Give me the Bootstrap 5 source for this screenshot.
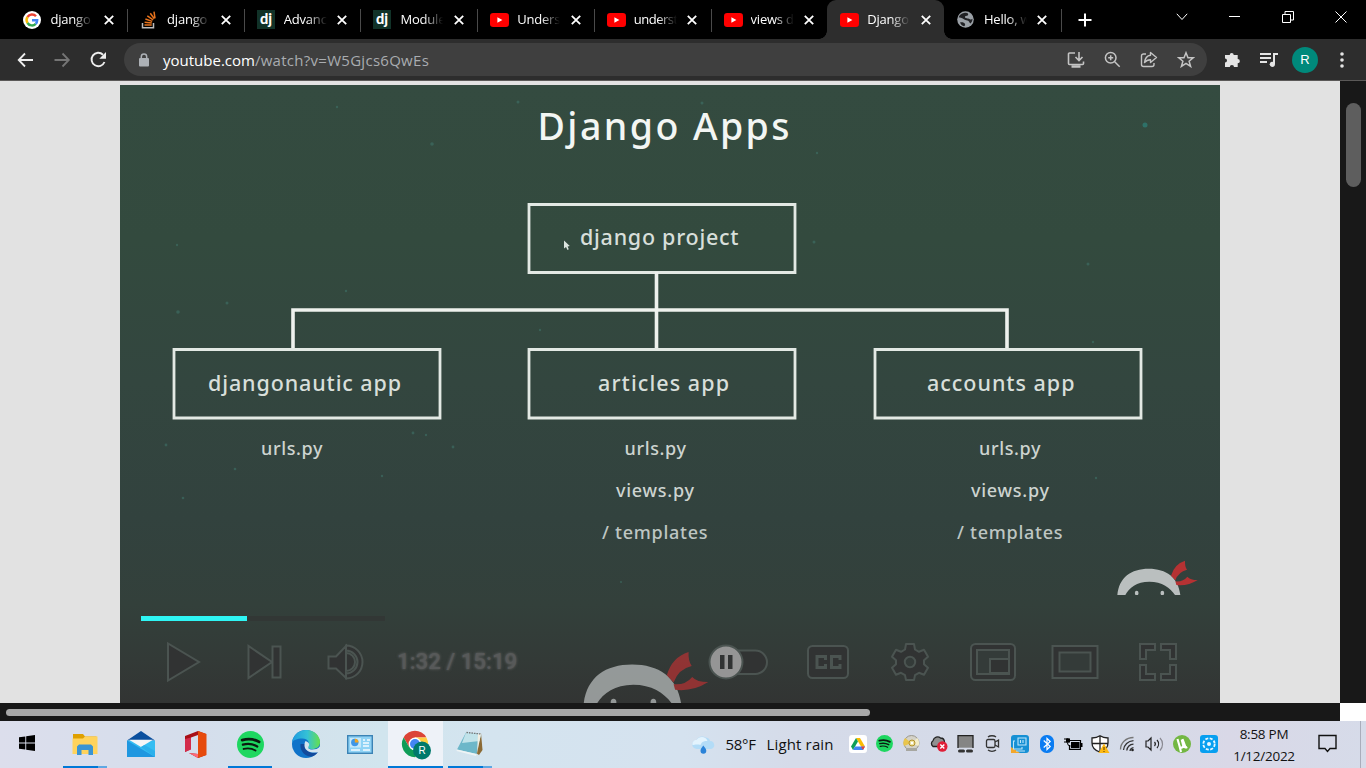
<!DOCTYPE html>
<html lang="en">
<head>
<meta charset="utf-8">
<meta name="viewport" content="width=device-width, initial-scale=1">
<title>Django Apps</title>
<link href="https://cdn.jsdelivr.net/npm/bootstrap@5.3.0/dist/css/bootstrap.min.css" rel="stylesheet">
<style>
body{width:1366px;height:768px;overflow:hidden;font-family:"Open Sans","Noto Sans",sans-serif;background:#000}
svg{display:block;flex:none}
/* tab strip */
.strip{height:39px;background:#000;padding-left:10.4px;color:#fff;font-size:13px}
.tab{width:116.7px;flex:none;height:39px;padding-left:13px;position:relative}
.tab::after{content:"";position:absolute;right:-1px;top:9px;width:1px;height:23px;background:#4a4a4a}
.tab.plain::after{display:none}
.tab .ttl{width:43px;margin-left:9px;white-space:nowrap;letter-spacing:-.2px;-webkit-mask-image:linear-gradient(90deg,#000 55%,transparent);mask-image:linear-gradient(90deg,#000 55%,transparent)}
.tab .x{margin-left:10.5px}
.tab.on{background:#2d2d2d;border-radius:9px 9px 0 0}
.tab.on::before{content:"";position:absolute;left:-8px;bottom:0;width:8px;height:8px;background:radial-gradient(circle at 0 0,transparent 7.5px,#2d2d2d 8px)}
.tab.on::after{right:-8px;top:auto;bottom:0;width:8px;height:8px;background:radial-gradient(circle at 100% 0,transparent 7.5px,#2d2d2d 8px)}
.wincap{width:53px}
.caps{padding-bottom:6px;margin-right:-1px}
/* toolbar */
.tools{height:42px;background:#2d2d2d;border-bottom:1px solid #5b5958;padding:0 16px 0 17px}
.omni{width:1083px;height:33px;background:#3f3f3f;border-radius:17px;margin-left:17px;padding:0 12px 0 13px;font-size:15px;color:#a9acb0}
.omni b{font-weight:400;color:#fff;letter-spacing:0}
.urltxt{letter-spacing:.28px;padding-top:1px}
.avatar{width:26px;height:26px;background:#00897b;color:#fff;font:13px "Liberation Sans",sans-serif}
/* page */
.view{height:622px;background:#e2e2e2}
.video{width:1100px;height:618px;margin:4px 0 0 120px;overflow:hidden;background:linear-gradient(#344b40 0,#334a3e 25%,#33463f 48%,#32423e 70%,#33403b 84%,#333a37 93%,#323433 100%)}
.stage{height:531px}
.track{height:5px;margin:0 21px;background:linear-gradient(90deg,#323735 244px,transparent 244px)}
.played{height:5px;background:#2ff5f4}
.ctl{height:44px;margin:19px 0 0 22px}
.ctl .cell{width:81px}
.ctl .cell.r{width:82.5px}
.time{width:121px;margin:-3px 0 0 12px;font:500 22.3px Roboto,sans-serif;color:#575959;text-shadow:0 0 3px #6a6a6a;white-space:nowrap}
.glyphs *{vector-effect:non-scaling-stroke}
.glyphs{fill:#313333;stroke:#4b5451;stroke-width:2}
.logo{position:absolute}
.vbar{width:26px;background:#181818;padding:22px 5px 0 6px}
.vbar div{height:84px;border-radius:8px;background:#5e5e5e}
.hbar{height:18px;background:#181818;padding:6px 0 0 6px}
.hbar div{width:864px;height:7px;border-radius:4px;background:#a8a8a8}
.corner{width:26px;background:#fff}
/* taskbar */
.task{height:47px;background:linear-gradient(90deg,#dcdeec 0,#d5deec 14%,#d3e2ec 22%,#d1e5ee 28%,#d4e4ef 36%,#d5e2ef 50%,#d5dbe9 58%,#d5dae8 72%,#d4dce9 80%,#d9d8e7 90%,#d6dbe9 100%);color:#111}
.app{width:55px;height:47px;position:relative;padding-bottom:1px}
.app .ln{position:absolute;bottom:0;height:2px;background:#0078d7}
.app.act{background:#eef2f8}
.wx{font-size:15px;letter-spacing:-.1px}
.tray{padding-bottom:2px}
.tray>div{width:27px}
.clock{font-size:13.500px;line-height:22px;width:84px;letter-spacing:-.25px}
</style>
</head>
<body class="d-flex flex-column m-0">
<svg width="0" height="0" class="position-absolute">
 <defs>
  <symbol id="x" viewBox="0 0 10 10"><path d="M.8.8l8.4 8.4M9.2.8L.8 9.2" stroke="#fff" stroke-width="1.8"/></symbol>
  <symbol id="yt" viewBox="0 0 19 14"><rect width="19" height="14" rx="3.2" fill="#f00"/><path d="M7.4 4.2v5.6l5-2.8z" fill="#fff"/></symbol>
  <symbol id="spot" viewBox="0 0 26 26"><circle cx="13" cy="13" r="13" fill="#1ed760"/><g fill="none" stroke="#0b1a10" stroke-linecap="round"><path d="M5 8.7c5.500-1.600 11.500-1 16.300 1.800" stroke-width="2.700"/><path d="M5.700 13.200c4.700-1.300 9.700-.7 13.800 1.700" stroke-width="2.200"/><path d="M6.400 17.300c4-1 8-.5 11.400 1.500" stroke-width="1.800"/></g></symbol>
  <symbol id="ninja" viewBox="770 60 245 105"><path d="M771 165C776 112 812 86 865 86S954 112 960 165H944C930 143 905 125 867 125S806 144 795 165z" fill="#babfbf"/><ellipse cx="829" cy="159" rx="5.500" ry="7" fill="#babfbf"/><ellipse cx="906" cy="159" rx="5.500" ry="7" fill="#babfbf"/><path d="M932 107Q942 72 974 62Q973 79 980 89Q954 95 945 121zM945 124Q968 126 981 110Q990 120 1012 120Q982 139 948 135z" fill="#b53233"/></symbol>
  <symbol id="dj" viewBox="0 0 18 19"><rect width="18" height="19" fill="#113228"/><text x="3" y="14.200" font-family="Lato,sans-serif" font-weight="900" font-size="14.500" fill="#fff" textLength="12">dj</text></symbol>
 </defs>
</svg>

<header class="strip d-flex align-items-center">
 <div class="tab d-flex align-items-center"><svg width="18" height="18" viewBox="0 0 18 18"><circle cx="9" cy="9" r="9" fill="#fff"/><g fill="none" stroke-width="2.400"><path d="M4.500 6A5.300 5.300 0 0 1 13 5.300" stroke="#ea4335"/><path d="M4.500 12A5.500 5.500 0 0 1 4.500 6" stroke="#fbbc05"/><path d="M12.700 12.900A5.300 5.300 0 0 1 4.500 12" stroke="#34a853"/><path d="M9 9.200h5.200a5.300 5.300 0 0 1-1.500 3.700" stroke="#4285f4"/></g></svg><span class="ttl">django</span><svg class="x" width="10" height="10"><use href="#x"/></svg></div>
 <div class="tab d-flex align-items-center"><svg width="18" height="18" viewBox="0 0 18 18"><path d="M2.500 12v4.700h11V12" fill="none" stroke="#bcbbbb" stroke-width="1.500"/><g stroke="#e8731c" stroke-width="1.500"><path d="M4.500 14h7.200M4.600 11.200l7.200.9M5.400 8l6.800 2.400M7.300 4.800l5.800 4M10.300 2.200l4 5.600M14 .7l1 6.600"/></g></svg><span class="ttl">django</span><svg class="x" width="10" height="10"><use href="#x"/></svg></div>
 <div class="tab d-flex align-items-center"><svg width="18" height="19"><use href="#dj"/></svg><span class="ttl">Advanc</span><svg class="x" width="10" height="10"><use href="#x"/></svg></div>
 <div class="tab d-flex align-items-center"><svg width="18" height="19"><use href="#dj"/></svg><span class="ttl">Module</span><svg class="x" width="10" height="10"><use href="#x"/></svg></div>
 <div class="tab d-flex align-items-center"><svg width="19" height="14" style="margin-right:-1px"><use href="#yt"/></svg><span class="ttl">Unders</span><svg class="x" width="10" height="10"><use href="#x"/></svg></div>
 <div class="tab d-flex align-items-center"><svg width="19" height="14" style="margin-right:-1px"><use href="#yt"/></svg><span class="ttl" style="letter-spacing:-.5px">underst</span><svg class="x" width="10" height="10"><use href="#x"/></svg></div>
 <div class="tab plain d-flex align-items-center"><svg width="19" height="14" style="margin-right:-1px"><use href="#yt"/></svg><span class="ttl">views d</span><svg class="x" width="10" height="10"><use href="#x"/></svg></div>
 <div class="tab on d-flex align-items-center"><svg width="19" height="14" style="margin-right:-1px"><use href="#yt"/></svg><span class="ttl">Django</span><svg class="x" width="10" height="10"><use href="#x"/></svg></div>
 <div class="tab d-flex align-items-center"><svg width="17" height="17" viewBox="0 0 17 17"><circle cx="8.500" cy="8.500" r="8.300" fill="#9aa0a6"/><path d="M7 2c3-.8 5 .5 4 2s-3 .3-3 2 3 1 4.500 2 2 .5 3-.3c0 2-.8 3.500-2 4.800-1-.2-1-1.800-2-2.500S8 9.500 6.500 8 2.500 7 1.700 6.300C2.300 4 4.500 2.400 7 2zM3 11.500c2-.5 4.500 0 5 1.500s-.5 2-1 2.300C5.200 14.800 3.800 13.500 3 11.500z" fill="#202124"/></svg><span class="ttl" style="margin-left:10px">Hello, w</span><svg class="x" width="10" height="10"><use href="#x"/></svg></div>
 <svg class="ms-3" width="16" height="16" viewBox="0 0 16 16"><path d="M8 1.500v13M1.500 8h13" stroke="#fff" stroke-width="2"/></svg>
 <div class="caps d-flex ms-auto align-items-center">
  <div class="wincap d-flex justify-content-center"><svg width="12" height="8" viewBox="0 0 12 8"><path d="M.8.800l5.200 5.700L11.200.800" fill="none" stroke="#fff"/></svg></div>
  <div class="wincap d-flex justify-content-center"><svg width="11" height="8"><path d="M0 3.500h11" stroke="#fff"/></svg></div>
  <div class="wincap d-flex justify-content-center"><svg width="12" height="12" viewBox="0 0 12 12"><path d="M.5 3.500h8v8h-8zM3 3V.5h8.500V9H9" fill="none" stroke="#fff"/></svg></div>
  <div class="wincap d-flex justify-content-center"><svg width="12" height="12" viewBox="0 0 12 12"><path d="M.5.5l11 11M11.500.5l-11 11" stroke="#fff"/></svg></div>
 </div>
</header>

<nav class="tools d-flex align-items-center">
 <svg width="17" height="16" viewBox="0 0 17 16" fill="none" stroke="#eee" stroke-width="1.800"><path d="M16 8H2.500M8 1.500L1.700 8 8 14.500"/></svg>
 <svg style="margin-left:20px" width="17" height="16" viewBox="0 0 17 16" fill="none" stroke="#757575" stroke-width="1.800"><path d="M.5 8h14M8.500 1.500L14.800 8l-6.300 6.500"/></svg>
 <svg style="margin-left:19px" width="17" height="17" viewBox="0 0 17 17"><path d="M14.500 11A6.700 6.700 0 1 1 13 3.700" fill="none" stroke="#eee" stroke-width="1.900"/><path d="M16 1v6.700H9.300z" fill="#eee"/></svg>
 <div class="omni d-flex align-items-center">
  <svg width="14" height="14" viewBox="0 0 14 14"><rect x="2" y="5" width="10" height="8.500" rx="1" fill="#adb1b6"/><path d="M4.300 5.500V3.700a2.700 2.700 0 0 1 5.400 0v1.800" fill="none" stroke="#adb1b6" stroke-width="1.500"/></svg>
  <span class="ms-2 ps-1 urltxt"><b>youtube.com</b>/watch?v=W5Gjcs6QwEs</span>
  <div class="d-flex ms-auto align-items-center" style="gap:19px" >
   <svg width="18" height="18" viewBox="0 0 18 18" fill="none" stroke="#c4c4c4" stroke-width="1.600"><path d="M8 2H2.500a1 1 0 0 0-1 1v9.500a1 1 0 0 0 1 1h13a1 1 0 0 0 1-1V10.500M12 1v8M8.500 6L12 9.500 15.500 6"/><path d="M4.500 15.500h9" stroke-width="2.500"/></svg>
   <svg width="17" height="17" viewBox="0 0 17 17" fill="none" stroke="#c4c4c4" stroke-width="1.500"><circle cx="6.700" cy="6.700" r="5.300"/><path d="M10.700 10.700l5 5M4.200 6.700h5M6.700 4.200v5"/></svg>
   <svg width="18" height="17" viewBox="0 0 18 17" fill="none" stroke="#c4c4c4" stroke-width="1.400" stroke-linejoin="round"><path d="M6 3H3.500A2 2 0 0 0 1.500 5v8.500a2 2 0 0 0 2 2H12a2 2 0 0 0 2-2V12"/><path d="M10.500 1.500l6 5-6 5V8.700C8 8.700 6 9.500 4.500 11.500 5 7.500 7 4.700 10.500 4.300z"/></svg>
   <svg width="18" height="17" viewBox="0 0 18 17"><path d="M9 1.800l2 5h5.200l-4.100 3.400 1.500 5.200L9 12.300l-4.600 3.100 1.500-5.200L1.800 6.800H7z" fill="none" stroke="#c4c4c4" stroke-width="1.500"/></svg>
  </div>
 </div>
 <svg style="margin-left:17px" width="17" height="17" viewBox="0 0 17 17"><path d="M2 4h3.700a2 2 0 1 1 4 0h4v4a2 2 0 1 1 0 4.300V16H10a2 2 0 0 0-4.200 0H1v-4.500a2 2 0 0 0 0-4V4z" fill="#e4e4e4"/></svg>
 <svg style="margin-left:18px" width="20" height="16" viewBox="0 0 20 16"><path d="M1 2h11M1 6h11M1 10h7" stroke="#e4e4e4" stroke-width="1.800"/><path d="M15 12V2h4" fill="none" stroke="#e4e4e4" stroke-width="2"/><circle cx="13.300" cy="12.300" r="2.600" fill="#e4e4e4"/></svg>
 <div class="avatar rounded-circle d-flex align-items-center justify-content-center" style="margin-left:13px">R</div>
 <svg class="ms-auto" width="16" height="18"><g fill="#e4e4e4"><circle cx="8" cy="3" r="1.800"/><circle cx="8" cy="9" r="1.800"/><circle cx="8" cy="15" r="1.800"/></g></svg>
</nav>

<main class="view d-flex">
 <section class="flex-grow-1">
  <div class="video position-relative">
   <svg class="stage" width="1100" height="531" viewBox="120 85 1100 531" font-family="'Noto Sans',sans-serif">
    <g fill="#3f7268" opacity=".6"><circle cx="1145" cy="125" r="2.500" fill="#2c8b84"/><circle cx="518" cy="102" r="1.500"/><circle cx="337" cy="107" r="1.200"/><circle cx="432" cy="144" r="1.800"/><circle cx="702" cy="103" r="1.500"/><circle cx="817" cy="153" r="1.200"/><circle cx="814" cy="242" r="1.500"/><circle cx="177" cy="245" r="1.200"/><circle cx="227" cy="303" r="1.500"/><circle cx="178" cy="312" r="1.800"/><circle cx="346" cy="291" r="1.200"/><circle cx="1088" cy="264" r="1.500"/><circle cx="1093" cy="342" r="1.200"/><circle cx="413" cy="433" r="1.400"/><circle cx="426" cy="435" r="1.200"/><circle cx="453" cy="447" r="1.400"/><circle cx="235" cy="469" r="1.300"/><circle cx="382" cy="476" r="1.200"/><circle cx="183" cy="498" r="1.300"/><circle cx="1096" cy="478" r="1.200"/><circle cx="540" cy="330" r="1.200"/><circle cx="166" cy="445" r="1.400"/><circle cx="621" cy="582" r="1"/></g>
    <g fill="none" stroke="#e3e9e4" stroke-width="2.800"><path d="M529 204.500h266v68H529z"/><path d="M174 349.500h266V418H174zM529 349.500h266V418H529zM875 349.500h266V418H875z"/><path d="M656.500 272v76M293 348v-38h714v38" stroke="#eef1ed" stroke-width="3.600"/></g>
    <text x="537.500" y="140" font-size="37.500" fill="#f3f6f3" textLength="252" font-weight="500">Django Apps</text>
    <g font-size="21.500" fill="#d8dfda" font-weight="500">
     <text x="580" y="245" textLength="158.500">django project</text>
     <text x="208" y="390.500" textLength="193">djangonautic app</text>
     <text x="598" y="390.500" textLength="131">articles app</text>
     <text x="927" y="390.500" textLength="147.500">accounts app</text>
    </g>
    <g font-size="18" fill="#cdd4d0" font-weight="500">
     <text x="261" y="454.500" textLength="61.500">urls.py</text>
     <text x="624.500" y="454.500" textLength="61.500">urls.py</text>
     <text x="979" y="454.500" textLength="61.500">urls.py</text>
     <text x="616" y="497" textLength="78">views.py</text>
     <text x="971" y="497" textLength="78">views.py</text>
     <text x="602" y="539" textLength="105.500" fill="#bec6c3">/ templates</text>
     <text x="957" y="539" textLength="105.500" fill="#bec6c3">/ templates</text>
    </g>
    <path d="M564 240.500v8l2-1.500 1.500 3 1.300-.8-1.200-2.600 2.200-.6z" fill="#dce5df"/>
   </svg>
   <svg class="logo" style="left:997px;top:475px" width="81.700" height="35"><use href="#ninja"/></svg>
   <svg class="logo" style="left:463px;top:566px;opacity:.72" width="126.800" height="54.400"><use href="#ninja"/></svg>
   <div class="track"><div class="played" style="width:106px"></div></div>
   <div class="ctl d-flex align-items-center glyphs position-relative">
    <div class="cell d-flex justify-content-center"><svg width="40" height="44" viewBox="0 0 40 44"><path d="M5 3.500v37L36 22z"/></svg></div>
    <div class="cell d-flex justify-content-center"><svg width="40" height="44" viewBox="0 0 40 44"><path d="M4.500 6v32L28 22zM28.500 6.500h8v31h-8z"/></svg></div>
    <div class="cell d-flex justify-content-center"><svg width="40" height="44" viewBox="0 0 40 44"><path d="M3.500 16.500H11L21 6v32L11 28.500H3.500zM21 5.500a16.500 16.500 0 0 1 0 33v-5a11.500 11.500 0 0 0 0-23zM21 13a9 9 0 0 1 0 18z"/></svg></div>
    <div class="time">1:32 / 15:19</div>
    <div class="ms-auto d-flex" style="margin-right:21px">
     <div class="cell r d-flex justify-content-center"><svg style="margin-right:15px" width="62" height="44" viewBox="0 0 62 44"><rect x="9" y="10.500" width="51" height="23.500" rx="11.700"/><circle cx="19" cy="22" r="16.500" fill="#959595"/><path d="M13 15h4.500v14H13zM21 15h4.500v14H21z" stroke="none"/></svg></div>
     <div class="cell r d-flex justify-content-center"><svg width="44" height="44" viewBox="0 0 44 44"><rect x="2" y="6" width="40" height="32" rx="4.500"/><path d="M19.500 20v-3.500H11v11h8.500V24M34 20v-3.500h-8.500v11H34V24" fill="none" stroke-width="3"/></svg></div>
     <div class="cell r d-flex justify-content-center"><svg width="40" height="44" viewBox="0 0 40 44"><path d="M16 4h8l1 5.500 4 2.300 5-2 4 7-4 3.500v4l4 3.500-4 7-5-2-4 2.300-1 5h-8l-1-5-4-2.300-5 2-4-7 4-3.500v-4l-4-3.500 4-7 5 2 4-2.300z" stroke-linejoin="round"/><circle cx="20" cy="22" r="5.200" fill="#343b39"/></svg></div>
     <div class="cell r d-flex justify-content-center"><svg width="48" height="44" viewBox="0 0 48 44"><rect x="2" y="4" width="44" height="36" rx="4.500"/><path d="M8 10h32v24H8z" fill="#343b39"/><path d="M21 19h19v14H21z"/></svg></div>
     <div class="cell r d-flex justify-content-center"><svg width="48" height="44" viewBox="0 0 48 44"><path d="M1.500 6h45v32h-45z"/><path d="M8.500 12.500h31v19h-31z" fill="#343b39"/></svg></div>
     <div class="cell r d-flex justify-content-center"><svg width="40" height="44" viewBox="0 0 40 44"><path d="M2 4h15v6H8v9H2zM23 4h15v15h-6v-9h-9zM2 25h6v9h9v6H2zM32 25h6v15H23v-6h9z"/></svg></div>
    </div>
   </div>
  </div>
 </section>
 <aside class="vbar"><div></div></aside>
</main>
<div class="d-flex"><div class="hbar flex-grow-1"><div></div></div><div class="corner"></div></div>

<footer class="task d-flex align-items-center">
 <div class="d-flex justify-content-center pb-1" style="width:54px;margin-right:4px"><svg width="16" height="16" viewBox="0 0 16 16"><path d="M0 2.300l6.300-.9v6.100H0zM7.200 1.300L16 0v7.500H7.200zM0 8.400h6.300v6.200L0 13.700zM7.200 8.400H16V16l-8.800-1.300z" fill="#000"/></svg></div>
 <div class="app d-flex align-items-center justify-content-center"><svg style="margin-right:2px" width="26" height="22" viewBox="0 0 26 22"><path d="M1 1h10l2 2.500h11.500V12H1z" fill="#dfa000"/><path d="M.500 5.500H11L13 3.500h12.500V21H.500z" fill="#ffd35c"/><path d="M5 22v-8.500l2-2h12l2 2V22h-4.500v-5h-7v5z" fill="#3a94d3"/></svg><div class="ln" style="left:5px;width:35px"></div><div class="ln" style="left:40px;width:9px;background:#5fa8e3"></div></div>
 <div class="app d-flex align-items-center justify-content-center"><svg width="28" height="26" viewBox="0 0 28 26"><path d="M0 9.500L14 0l14 9.500z" fill="#0a4f9e"/><path d="M0 9.500h28V26H0z" fill="#35bdf2"/><path d="M0 9.500L28 26H0z" fill="#1f97e0"/><path d="M2 8.800h24L14 16z" fill="#f5f5f7"/><path d="M14 16l3.500-2L28 20v6z" fill="#2bb0ec"/></svg></div>
 <div class="app d-flex align-items-center justify-content-center"><svg width="22" height="27" viewBox="0 0 22 27"><path d="M0 5L13 0l8 3v21l-8 3-9-5 9 1V4L6 6.500V18l-6 3z" fill="#a80f16"/><path d="M13 0l8.500 3v21L13 27z" fill="#e64a0c"/><path d="M0 21l6-2.500V6.500L0 8z" fill="#d32b4b"/><path d="M4 22l9 1v4z" fill="#ff6a78"/></svg></div>
 <div class="app d-flex align-items-center justify-content-center"><svg style="margin-right:1px" width="27" height="27"><use href="#spot"/></svg><div class="ln" style="left:5px;width:44px"></div></div>
 <div class="app d-flex align-items-center justify-content-center"><svg width="28" height="28" viewBox="0 0 28 28"><defs><linearGradient id="eg"><stop offset="0" stop-color="#1e9be0"/><stop offset=".55" stop-color="#35c1d6"/><stop offset="1" stop-color="#66e04b"/></linearGradient></defs><circle cx="14" cy="14" r="14" fill="#0f73c9"/><path d="M0 13C1 5 7 0 14 0c8 0 14 5.500 14 12 0 5-4 7-7.500 7-4 0-5.500-1.500-4-3.500 1.500-2.500-.5-7-6-7C5 8.500 1 10 0 13z" fill="url(#eg)"/><path d="M8.500 14c-1 7 5 12.500 10 12.500 3 0 6-2 7.500-4.500C20 25 12 21 13 14z" fill="#114a9c"/><path d="M13.500 11c3.500 1 4.500 3.500 3 5.500-1 2 1 3 4 3 3 0 5.500-.6 8-3.500v5l-2 1C21 23.500 13 22 12.500 16c0-2 0-3.500 1-5z" fill="#d4e4ef"/></svg></div>
 <div class="app d-flex align-items-center justify-content-center"><svg style="margin-right:1px" width="26" height="19" viewBox="0 0 26 19"><rect x=".7" y=".7" width="24.600" height="17.600" fill="#8fd3f5" stroke="#3b83b5" stroke-width="1.400"/><rect x="3" y="3" width="11" height="9.500" fill="#c6e9fb"/><circle cx="7.800" cy="7.500" r="3.700" fill="#3e97e8"/><path d="M7.800 7.500V3.800a3.700 3.700 0 0 1 3.700 3.700z" fill="#f3a51f"/><path d="M16 8h6M16 11h6M16 5h2M20 5h3M4 15h9M16 15h7" stroke="#f5fcff" stroke-width="1.400"/></svg></div>
 <div class="app act d-flex align-items-center justify-content-center"><svg style="margin-left:2px;margin-top:2px" width="31" height="30" viewBox="0 0 31 30"><circle cx="14" cy="14" r="13.200" fill="#fff"/><path d="M2.600 7.400A13.200 13.200 0 0 1 25.400 7.400H14L8.300 17.300z" fill="#db4437"/><path d="M25.400 7.400A13.200 13.200 0 0 1 14 27.200l5.700-9.900L14 7.400z" fill="#ffcd40"/><path d="M14 27.200A13.200 13.200 0 0 1 2.600 7.400L8.300 17.300h11.400z" fill="#0f9d58"/><circle cx="14" cy="14" r="6.400" fill="#fff"/><circle cx="14" cy="14" r="5" fill="#4285f4"/><circle cx="21" cy="20.500" r="9" fill="#00796b"/><text x="21" y="24.300" text-anchor="middle" font-size="10" font-family="Liberation Sans,sans-serif" fill="#fff">R</text></svg><div class="ln" style="left:0;width:55px"></div></div>
 <div class="app d-flex align-items-center justify-content-center"><svg style="margin-right:3px" width="27" height="26" viewBox="0 0 27 26"><path d="M25 2l1.500 17-3.500 5-6-4z" fill="#8b6a35"/><path d="M10 1.500L25 3l-4.500 20L1 18.500z" fill="#6db7c9"/><path d="M10 1.500L25 3l-1.500 7L6 12z" fill="#c1e3ea"/><path d="M1 18.500L20.500 23l-.4 2L.500 20z" fill="#eef4f5"/><path d="M22 3l3-.5-4 20z" fill="#f4efe2"/><path d="M10.500 1.500L25 3" stroke="#777" stroke-width="1.300" stroke-dasharray="1.500 1"/></svg><div class="ln" style="left:5px;width:35px"></div><div class="ln" style="left:40px;width:9px;background:#5fa8e3"></div></div>

 <div class="d-flex align-items-center ms-auto wx">
  <svg width="24" height="18" viewBox="0 0 24 18"><path d="M6 13a4.500 4.500 0 0 1-.5-9C7 1 11-.5 14.500 1.500 19 2 19 5 19 5c5 0 6 7 1 8z" fill="#b3dcf7"/><path d="M5.500 4C8 0 15 0 16.500 5 12 4.500 10 7 9.500 9 6 8 3 9 1.500 9 1 6 3 4 5.500 4z" fill="#e3f3fd"/><path d="M12.300 9.500c1.600 2 3 3.500 3 5.300a2.900 2.900 0 0 1-5.800 0c0-1.800 1.300-3.300 2.800-5.300z" fill="#2b83d8"/></svg>
  <span class="deg" style="width:41px;margin-left:11px;letter-spacing:-.3px">58°F</span><span style="width:77.500px;letter-spacing:.15px" class="text-nowrap">Light rain</span>
 </div>
 <div class="tray d-flex align-items-center">
  <div><svg class="mx-auto" width="18" height="18" viewBox="0 0 18 18"><rect width="18" height="18" rx="3" fill="#fff"/><path d="M7 3h4l5 8.500h-4z" fill="#fbbc04"/><path d="M7 3l2 3.400-5 8.600-2-3.500z" fill="#0f9d58"/><path d="M6 11.500h10L14 15H4z" fill="#4285f4"/><path d="M12 11.500h4L14 15z" fill="#ea4335"/></svg></div>
  <div><svg class="mx-auto" width="17" height="17"><use href="#spot"/></svg></div>
  <div><svg class="mx-auto" width="17" height="17" viewBox="0 0 17 17"><circle cx="8.500" cy="8" r="7.500" fill="#d4d2c8" stroke="#99978d"/><path d="M8.500 8L2 3a8 8 0 0 0-1 8z" fill="#e9c54c"/><path d="M8.500 8l7 3a8 8 0 0 0-1-8z" fill="#f4edc8"/><circle cx="9" cy="8" r="3" fill="#ecdf9c" stroke="#b4922a"/><circle cx="9" cy="8" r="1.200" fill="#fff"/><path d="M3 13h11v3H3z" fill="#a7a7a1"/></svg></div>
  <div><svg class="mx-auto" width="19" height="17" viewBox="0 0 19 17"><path d="M4 11.500a3.500 3.500 0 0 1 0-5.800C5 2 9 1 11.500 3c3 0 4 2.500 4 4.500v4z" fill="#909090" stroke="#222" stroke-width="1.300"/><circle cx="13.300" cy="11.500" r="5.200" fill="#e01e37"/><path d="M11.300 9.500l4 4M15.300 9.500l-4 4" stroke="#fff" stroke-width="1.400"/></svg></div>
  <div><svg class="mx-auto" width="17" height="18" viewBox="0 0 17 18"><path d="M1 .7h15v12H1z" fill="#858585"/><path d="M1 13V.700h15V13" fill="none" stroke="#222" stroke-width="1.300"/><path d="M2.500 16h4M10.500 16h4" stroke="#333" stroke-width="3" stroke-linecap="round"/></svg></div>
  <div><svg class="mx-auto" width="15" height="17" viewBox="0 0 15 17" fill="none" stroke="#333" stroke-width="1.300"><rect x="1.500" y="4.500" width="8.500" height="8" rx="1.500"/><path d="M10 7l3.500-2v7L10 10M3 2c2-1.700 6-1.700 8 0M3 15c2 1.700 6 1.700 8 0"/></svg></div>
  <div><svg class="mx-auto" width="18" height="18" viewBox="0 0 18 18"><rect width="18" height="18" rx="3" fill="#1690d4"/><path d="M0 12v6h9z" fill="#f3a72b"/><path d="M7 3h8v7H7zM4 6H2.500v8H11v-2M9.500 5v3M12 5v3M5 16h9" fill="none" stroke="#bfe6fa" stroke-width="1.100"/></svg></div>
  <div><svg class="mx-auto" width="14" height="18" viewBox="0 0 14 18"><rect width="14" height="18" rx="6.500" fill="#0a7cf2"/><path d="M3.700 5.500l6.500 6L7 14.500v-11l3.200 3-6.500 6" fill="none" stroke="#fff" stroke-width="1.200"/></svg></div>
  <div><svg class="mx-auto" width="19" height="14" viewBox="0 0 19 14"><path d="M7 5h8.500v6H7z" fill="#000"/><path d="M8 3.500h8.500v8.800H5.500V8" fill="none" stroke="#000" stroke-width="1.200"/><path d="M17 6h1.500v4H17zM0 1.500h2.500V1L6 1.500v4L2.500 6v-.5H0v-1h2v-2H0zM6 3h2v1H6z" fill="#000"/><path d="M3.500 6q0 3 3 3" fill="none" stroke="#000"/></svg></div>
  <div><svg class="mx-auto" width="19" height="18" viewBox="0 0 19 18"><path d="M9 .8C6.500 2.500 4 3 1 3v5c0 4.500 3 7.500 8 9.200 5-1.700 8-4.700 8-9.200V3c-3 0-5.500-.5-8-2.200zM9 1v16M1 8.500h16" fill="#fff" stroke="#222" stroke-width="1.300"/><path d="M13 8.500l5.500 9.500h-11z" fill="#fdb913"/><path d="M13 12v3M13 16v1" stroke="#5b3b00"/></svg></div>
  <div><svg class="mx-auto" width="17" height="17" viewBox="0 0 17 17" fill="none" stroke="#333" stroke-width="1.300"><path d="M1.500 14.500C1.500 8 7 2.500 14.500 2.500" stroke="#777"/><path d="M4.500 15C5 10 9 6 14.500 5.700M7.800 15.500c.5-3.500 3-6 6.700-6.300M11 16c.3-2 1.500-3.200 3.500-3.400"/><circle cx="13.500" cy="15" r="1.300" fill="#222" stroke="none"/></svg></div>
  <div><svg class="mx-auto" width="19" height="16" viewBox="0 0 19 16" fill="none" stroke="#222" stroke-width="1.200"><path d="M1 5h2l3-3v12l-3-3H1zM9.500 6a3 3 0 0 1 0 4M12 4a6 6 0 0 1 0 8"/><path d="M15 2a9 9 0 0 1 0 12.500" stroke="#8a8a92"/></svg></div>
  <div><svg class="mx-auto" width="18" height="18" viewBox="0 0 18 18"><circle cx="9" cy="9" r="9" fill="#73b743"/><path d="M4.500 4l2 7c.7 2.500 3.700 2 3.700-.5L8.700 4.500M10.500 10.500c.7 2 2 2.500 3.700 1.500M9.500 4l3 8M6.500 11l1.500 6" fill="none" stroke="#fff" stroke-width="2.100"/></svg></div>
  <div><svg class="mx-auto" width="18" height="18" viewBox="0 0 18 18"><rect width="18" height="18" rx="3" fill="#079ff0"/><circle cx="9" cy="9" r="5.700" fill="none" stroke="#e8f7ff" stroke-width="1.800" stroke-dasharray="3 1.480"/><circle cx="9" cy="9" r="2" fill="#e8f7ff"/></svg></div>
 </div>
 <div class="clock text-center">8:58 PM<br>1/12/2022</div>
 <svg style="margin:0 23px 2px 12px" width="19" height="19" viewBox="0 0 19 19"><path d="M1 1.500h17v13h-6L9.500 17.500 7 14.500H1z" fill="none" stroke="#111" stroke-width="1.400"/></svg>
 <div style="width:6px;height:47px;border-left:1px solid #a9adbb"></div>
</footer>
<script src="https://cdn.jsdelivr.net/npm/bootstrap@5.3.0/dist/js/bootstrap.bundle.min.js"></script>
</body>
</html>
